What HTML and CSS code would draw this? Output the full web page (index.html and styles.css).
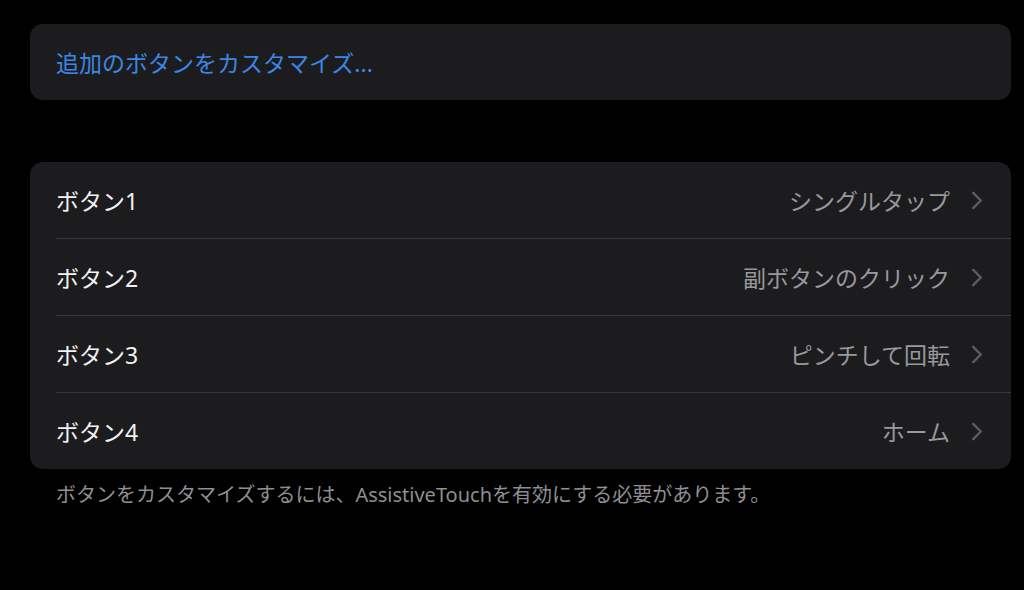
FILE: index.html
```html
<!DOCTYPE html>
<html lang="ja">
<head>
  <meta charset="UTF-8" />
  <meta name="viewport" content="width=device-width, initial-scale=1" />
  <title>AssistiveTouch</title>
  <link rel="stylesheet" href="styles.css">
</head>
<body>
  <div class="page">
    <div class="grupo">
      <div class="fila fila-enlace">追加のボタンをカスタマイズ...</div>
    </div>

    <div class="grupo grupo-botones">
      <div class="fila">
        <span class="etiqueta">ボタン1</span>
        <span class="valor">シングルタップ</span>
        <svg class="chevron" viewBox="0 0 12 20"><path d="M2 2 L10 10 L2 18" /></svg>
      </div>
      <div class="fila">
        <span class="etiqueta">ボタン2</span>
        <span class="valor">副ボタンのクリック</span>
        <svg class="chevron" viewBox="0 0 12 20"><path d="M2 2 L10 10 L2 18" /></svg>
      </div>
      <div class="fila">
        <span class="etiqueta">ボタン3</span>
        <span class="valor">ピンチして回転</span>
        <svg class="chevron" viewBox="0 0 12 20"><path d="M2 2 L10 10 L2 18" /></svg>
      </div>
      <div class="fila">
        <span class="etiqueta">ボタン4</span>
        <span class="valor">ホーム</span>
        <svg class="chevron" viewBox="0 0 12 20"><path d="M2 2 L10 10 L2 18" /></svg>
      </div>
    </div>
    <p class="nota">ボタンをカスタマイズするには、AssistiveTouchを有効にする必要があります。</p>
  </div>
</body>
</html>
```

FILE: styles.css
```css
body {
  margin: 0;
  background: #000;
  font-family: "Noto Sans", "Noto Sans CJK JP", sans-serif;
  color: #f2f2f4;
}
.page {
  padding: 24px 13px 0 30px;
}
.grupo {
  background: #1c1c1e;
  border-radius: 13px;
  overflow: hidden;
}
.grupo-botones {
  margin-top: 62px;
}
.fila {
  display: flex;
  align-items: center;
  height: 76px;
  margin-left: 26px;
  padding-right: 28px;
  font-size: 23px;
  border-top: 1px solid #38383a;
}
.fila:first-child {
  border-top: none;
}
.fila-enlace {
  color: #3a87e4;
}
.etiqueta {
  flex: 1;
}
.valor {
  color: #98989d;
}
.chevron {
  width: 12px;
  height: 19px;
  margin-left: 21px;
  fill: none;
  stroke: #5c5c60;
  stroke-width: 2.6;
  stroke-linecap: round;
  stroke-linejoin: round;
}
.nota {
  margin: 10px 0 0 26px;
  font-size: 20px;
  color: #8e8e93;
}
```
